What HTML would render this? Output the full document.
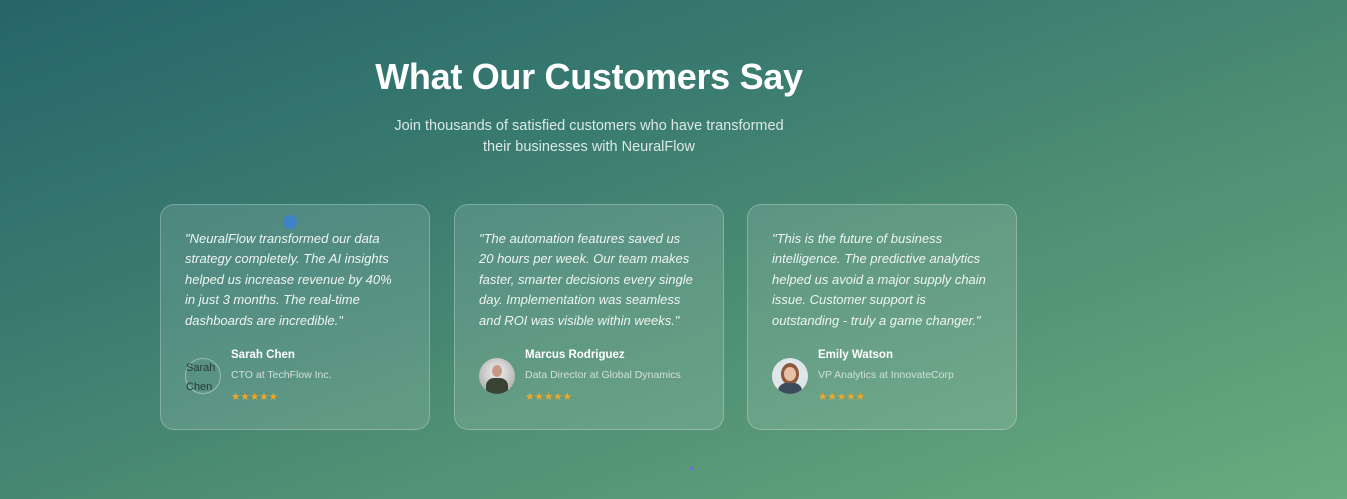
<!DOCTYPE html>
<html><head><meta charset="utf-8"><style>
*{margin:0;padding:0;box-sizing:border-box}
body{width:1347px;height:499px;overflow:hidden;font-family:"Liberation Sans",sans-serif;
background:linear-gradient(160deg,#25656a 0%,#3a7c70 35%,#4f8f74 60%,#6aab7f 100%);position:relative;color:#fff}
h1{position:absolute;left:0;width:1178px;text-align:center;top:56px;font-size:36px;font-weight:700;letter-spacing:-0.3px}
.sub{position:absolute;left:380px;width:418px;text-align:center;top:116px;font-size:14.5px;line-height:21px;color:#dce9e4}
.card{position:absolute;top:204px;width:270px;height:226px;border-radius:14px;border:1px solid rgba(255,255,255,0.25);
background:rgba(255,255,255,0.12)}
.q{position:absolute;left:24px;top:24px;width:240px;white-space:nowrap;font-style:italic;font-size:13px;line-height:20.4px;color:#eef5f2}
.av{position:absolute;left:24px;top:153px;width:36px;height:36px;border-radius:50%;overflow:hidden}
.name{position:absolute;left:70px;top:144px;font-size:11.5px;font-weight:700}
.role{position:absolute;left:70px;top:164px;font-size:10.5px;color:#cfe0da}
.stars{position:absolute;left:70px;top:186px;font-size:10.5px;color:#f5a623}
</style></head><body>
<h1>What Our Customers Say</h1>
<div class="sub">Join thousands of satisfied customers who have transformed<br>their businesses with NeuralFlow</div>

<div class="card" style="left:160px">
<div style="position:absolute;left:122px;top:10px;width:14px;height:14px;border-radius:50%;background:#3f82c8"></div>
<div class="q">"NeuralFlow transformed our data<br>strategy completely. The AI insights<br>helped us increase revenue by 40%<br>in just 3 months. The real-time<br>dashboards are incredible."</div>
<div class="av" style="border:1px solid rgba(255,255,255,0.4);overflow:visible;font-size:11px;line-height:19px;color:#2a3a3a">Sarah<br>Chen</div>
<div class="name">Sarah Chen</div><div class="role">CTO at TechFlow Inc.</div><div class="stars">★★★★★</div>
</div>

<div class="card" style="left:454px">
<div class="q">"The automation features saved us<br>20 hours per week. Our team makes<br>faster, smarter decisions every single<br>day. Implementation was seamless<br>and ROI was visible within weeks."</div>
<div class="av" style="background:radial-gradient(circle at 50% 40%,#f4f4f4,#9a9a9a)"><div style="position:absolute;left:13px;top:7px;width:10px;height:12px;border-radius:50%;background:#c89a86"></div><div style="position:absolute;left:7px;top:20px;width:22px;height:18px;border-radius:8px 8px 0 0;background:#3a4434"></div></div>
<div class="name">Marcus Rodriguez</div><div class="role">Data Director at Global Dynamics</div><div class="stars">★★★★★</div>
</div>

<div class="card" style="left:747px">
<div class="q">"This is the future of business<br>intelligence. The predictive analytics<br>helped us avoid a major supply chain<br>issue. Customer support is<br>outstanding - truly a game changer."</div>
<div class="av" style="background:#dfe6ea"><div style="position:absolute;left:9px;top:5px;width:18px;height:22px;border-radius:50%;background:#8a5a3a"></div><div style="position:absolute;left:12px;top:9px;width:12px;height:14px;border-radius:50%;background:#e8c0a8"></div><div style="position:absolute;left:6px;top:25px;width:24px;height:14px;border-radius:8px 8px 0 0;background:#3c4a5a"></div></div>
<div class="name">Emily Watson</div><div class="role">VP Analytics at InnovateCorp</div><div class="stars">★★★★★</div>
</div>

<div style="position:absolute;left:690px;top:467px;width:3px;height:3px;background:#6a6ad8"></div>
</body></html>
